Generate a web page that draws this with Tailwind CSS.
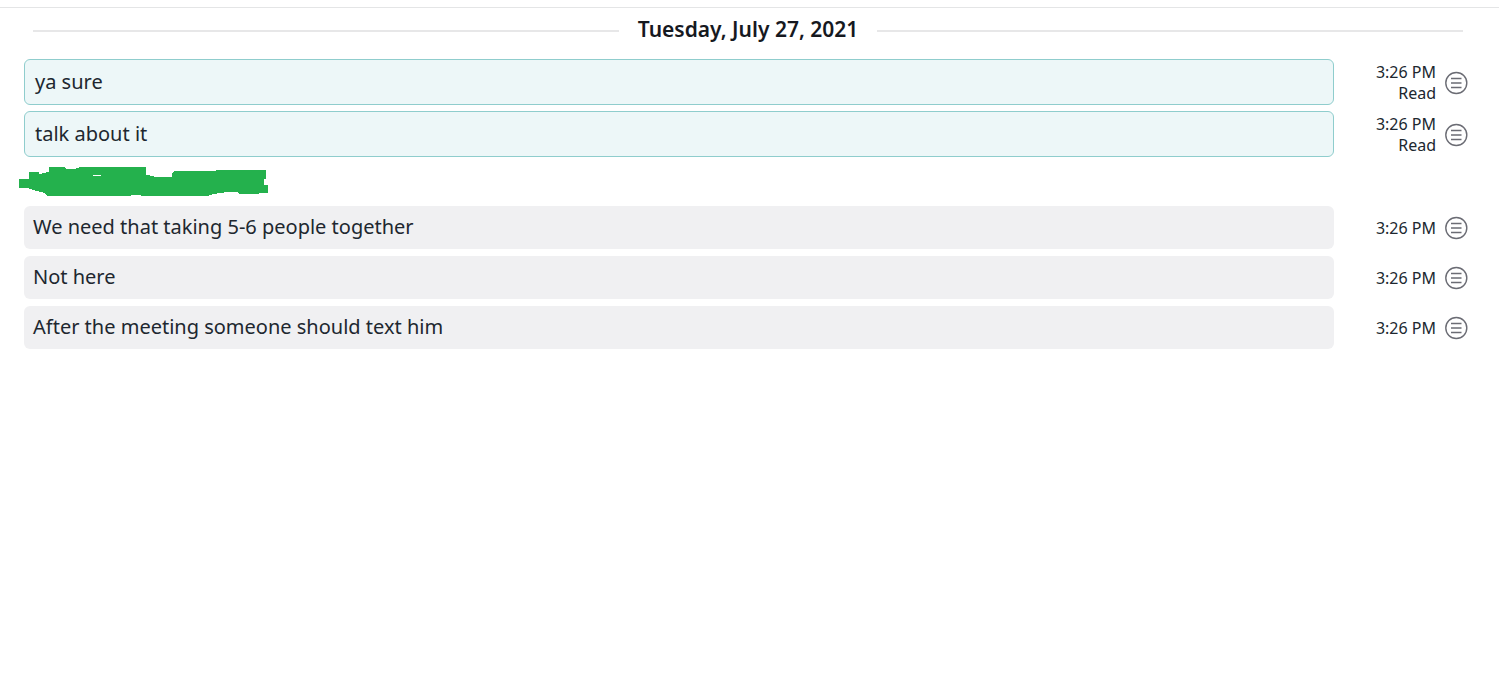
<!DOCTYPE html>
<html lang="en">
<head>
<meta charset="utf-8">
<meta name="viewport" content="width=device-width, initial-scale=1">
<title>Chat</title>
<script src="https://cdn.jsdelivr.net/npm/@tailwindcss/browser@4"></script>
</head>
<body class="bg-white pt-[7px] font-['Noto_Sans',sans-serif] text-[#20272f]">
<svg class="hidden">
  <symbol id="menu" viewBox="0 0 24 24" fill="none" stroke="#6b6c74">
    <circle cx="12.3" cy="12" r="10.5" stroke-width="1.4"/>
    <path d="M7 7.5h10.5M7 12h10.5M7 16.5h10.5" stroke-width="1.3"/>
  </symbol>
</svg>
<main class="border-t border-[#e4e5e6] pr-[31px] pl-6">
  <h1 class="mr-[5px] ml-[9px] flex h-[51px] items-start gap-[19px] pt-[7px] text-[21px] leading-7 font-semibold text-[#16191f]">
    <span class="mt-[15px] h-[2px] flex-1 bg-[#e7e7e8]"></span>
    Tuesday, July 27, 2021
    <span class="mt-[15px] h-[2px] flex-1 bg-[#e7e7e8]"></span>
  </h1>
  <ul class="flex flex-col gap-[6px]">
    <li class="flex items-center">
      <p class="h-[46px] flex-1 rounded-md border border-[#8fcdcd] bg-[#edf7f8] px-[10px] text-xl leading-[44px]">ya sure</p>
      <p class="w-[102px] pt-[2px] text-right text-base leading-[21px]">3:26 PM<br>Read</p>
      <button class="mt-[2px] ml-2 size-6" aria-label="Message options"><svg class="size-6"><use href="#menu"/></svg></button>
    </li>
    <li class="flex items-center">
      <p class="h-[46px] flex-1 rounded-md border border-[#8fcdcd] bg-[#edf7f8] px-[10px] text-xl leading-[44px]">talk about it</p>
      <p class="w-[102px] pt-[2px] text-right text-base leading-[21px]">3:26 PM<br>Read</p>
      <button class="mt-[2px] ml-2 size-6" aria-label="Message options"><svg class="size-6"><use href="#menu"/></svg></button>
    </li>
  </ul>
  <svg class="mt-[10px] mb-[10px] -ml-[5px] block h-[29px] w-[249px]" viewBox="0 0 249 29" fill="#24b14d" fill-rule="evenodd" shape-rendering="crispEdges" role="img" aria-label="Hidden name">
    <path d="M0 12H10V5H20V7H21L24 6L30 5V0H46L47 2H56L61 0H127V8H131V9L138 10H153V6L156 4H197V3H247V12H245V18H249V26H240V27H220L218 25H209L194 27L189 29H122V28H112V29H28L26 26L14 23L8 21H0ZM74 8V9H82V8Z"/>
  </svg>
  <ul class="flex flex-col gap-[7px]">
    <li class="flex items-center">
      <p class="h-[43px] flex-1 rounded-md bg-[#f0f0f2] px-[9px] text-xl leading-[42px]">We need that taking 5-6 people together</p>
      <p class="w-[102px] pt-[2px] text-right text-base leading-[21px]">3:26 PM</p>
      <button class="ml-2 size-6" aria-label="Message options"><svg class="size-6"><use href="#menu"/></svg></button>
    </li>
    <li class="flex items-center">
      <p class="h-[43px] flex-1 rounded-md bg-[#f0f0f2] px-[9px] text-xl leading-[42px]">Not here</p>
      <p class="w-[102px] pt-[2px] text-right text-base leading-[21px]">3:26 PM</p>
      <button class="ml-2 size-6" aria-label="Message options"><svg class="size-6"><use href="#menu"/></svg></button>
    </li>
    <li class="flex items-center">
      <p class="h-[43px] flex-1 rounded-md bg-[#f0f0f2] px-[9px] text-xl leading-[42px]">After the meeting someone should text him</p>
      <p class="w-[102px] pt-[2px] text-right text-base leading-[21px]">3:26 PM</p>
      <button class="ml-2 size-6" aria-label="Message options"><svg class="size-6"><use href="#menu"/></svg></button>
    </li>
  </ul>
</main>
</body>
</html>
